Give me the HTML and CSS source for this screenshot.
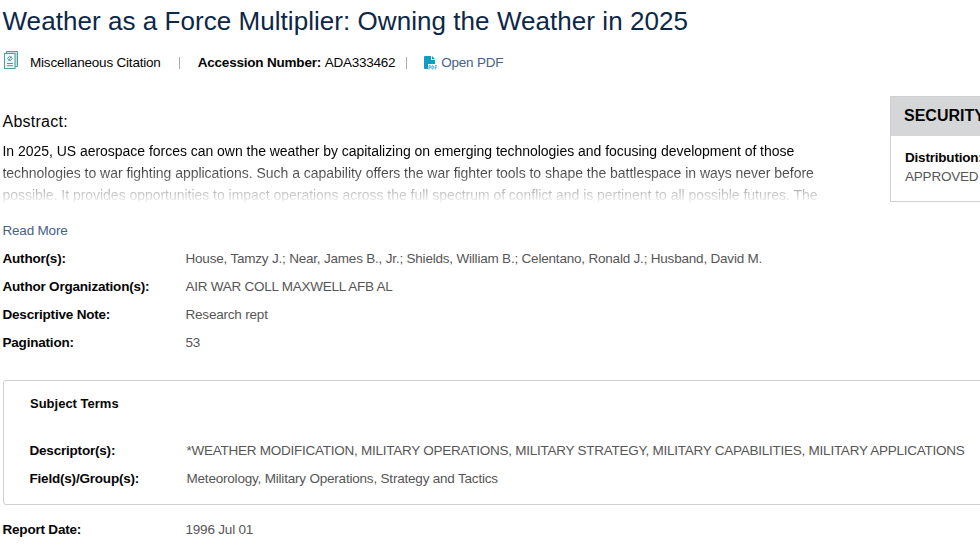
FILE: index.html
```html
<!DOCTYPE html>
<html lang="en">
<head>
  <meta charset="UTF-8" />
  <meta name="viewport" content="width=device-width, initial-scale=1.0" />
  <title>Weather as a Force Multiplier: Owning the Weather in 2025</title>
  <link rel="stylesheet" href="styles.css">
</head>
<body>
  <main class="citation">
    <h1>Weather as a Force Multiplier: Owning the Weather in 2025</h1>

    <div class="meta">
      <svg class="doc-icon" viewBox="0 0 16 19" fill="none" stroke="#4f9c98" stroke-width="1">
        <path d="M3.5 2.5v-2h11v15H12" fill="#c5e3e0" />
        <rect x="1.5" y="2.5" width="10.5" height="15" fill="#f1faf9" />
        <path d="M4.5 7.5l2.2-2.3 2.6 2.2-2.3 2.5zM5.3 9.6l3-4M4 12.5h5.8M4 14.7h5.8" />
      </svg>
      <span class="type">Miscellaneous Citation</span>
      <span class="divider"></span>
      <span class="accession"><b>Accession Number:</b> <span class="number">ADA333462</span></span>
      <span class="divider"></span>
      <a class="pdf" href="#">
        <svg class="pdf-icon" viewBox="0 0 13 14">
          <path d="M1 0h6v4h4v4H4v5H1a1 1 0 0 1-1-1V1a1 1 0 0 1 1-1z" fill="#119cc4" />
          <path d="M8 0l3 3H8z" fill="#119cc4" />
          <path d="M5 13.5V9.7h1a1 1 0 0 1 0 2H5M8 9.7v3.3h.5q1 0 1-1.6t-1-1.7zM11.2 13.5V9.7H13M11.2 11.4h1.5" fill="none" stroke="#39aed0" stroke-width=".9" />
        </svg>
        <span>Open PDF</span>
      </a>
    </div>

    <div class="overview">
      <div class="details">
        <h2>Abstract:</h2>
        <div class="abstract">
          <p>In 2025, US aerospace forces can own the weather by capitalizing on emerging technologies and focusing development of those</p>
          <p>technologies to war fighting applications. Such a capability offers the war fighter tools to shape the battlespace in ways never before</p>
          <p>possible. It provides opportunities to impact operations across the full spectrum of conflict and is pertinent to all possible futures. The</p>
        </div>
        <a class="read-more" href="#">Read More</a>
        <dl class="fields">
          <dt>Author(s):</dt>
          <dd>House, Tamzy J.; Near, James B., Jr.; Shields, William B.; Celentano, Ronald J.; Husband, David M.</dd>
          <dt>Author Organization(s):</dt>
          <dd class="caps">AIR WAR COLL MAXWELL AFB AL</dd>
          <dt>Descriptive Note:</dt>
          <dd>Research rept</dd>
          <dt>Pagination:</dt>
          <dd>53</dd>
        </dl>
      </div>
      <aside class="security">
        <h3>SECURITY</h3>
        <div class="security-body">
          <b>Distribution:</b>
          <span>APPROVED</span>
        </div>
      </aside>
    </div>

    <section class="subjects">
      <h4>Subject Terms</h4>
      <dl class="fields">
        <dt>Descriptor(s):</dt>
        <dd class="caps">*WEATHER MODIFICATION, MILITARY OPERATIONS, MILITARY STRATEGY, MILITARY CAPABILITIES, MILITARY APPLICATIONS</dd>
        <dt>Field(s)/Group(s):</dt>
        <dd>Meteorology, Military Operations, Strategy and Tactics</dd>
      </dl>
    </section>

    <dl class="fields report">
      <dt>Report Date:</dt>
      <dd>1996 Jul 01</dd>
    </dl>
  </main>
</body>
</html>
```
FILE: styles.css
```css
* {
  margin: 0;
  padding: 0;
  box-sizing: border-box;
}

body {
  font-family: "Liberation Sans", Arial, sans-serif;
  font-size: 13.5px;
  letter-spacing: -0.2px;
  color: #050505;
  background: #ffffff;
  overflow: hidden;
}

a {
  color: #466285;
  text-decoration: none;
}

.citation {
  width: 1180px;
  padding-left: 2.5px;
}

h1 {
  font-size: 26px;
  font-weight: 400;
  line-height: 42px;
  letter-spacing: 0.05px;
  color: #0d2747;
  white-space: nowrap;
}

.meta {
  display: flex;
  align-items: center;
  height: 40px;
}

.doc-icon {
  width: 16px;
  height: 19px;
  margin: -3px 11.5px 0 0;
}

.divider {
  width: 1px;
  height: 12px;
  background: #aaaaaa;
  margin: 1px 18px 0 18px;
}

.accession + .divider {
  margin: 1px 17px 0 11px;
}

.number {
  letter-spacing: -0.25px;
}

.pdf {
  display: flex;
  align-items: center;
}

.pdf-icon {
  width: 13px;
  height: 14px;
  margin: 1px 4px 0 0;
}

.overview {
  display: flex;
  align-items: flex-start;
  padding-top: 14px;
}

.details {
  width: 887.5px;
  flex: none;
  padding-top: 15px;
}

h2 {
  font-size: 16px;
  font-weight: 400;
  line-height: 22px;
  letter-spacing: 0.25px;
}

.abstract {
  height: 66px;
  margin-top: 7px;
  line-height: 22px;
  font-size: 14px;
  letter-spacing: -0.03px;
  white-space: nowrap;
  overflow: hidden;
  -webkit-mask-image: linear-gradient(#000 30%, transparent 97%);
  mask-image: linear-gradient(#000 30%, transparent 97%);
}

.read-more {
  display: block;
  margin-top: 11px;
  line-height: 28px;
}

.fields {
  display: grid;
  grid-template-columns: 183px 1fr;
  line-height: 28.1px;
}

.fields dt {
  font-weight: 700;
}

.fields dd {
  color: #565656;
  white-space: nowrap;
}

.fields .caps {
  letter-spacing: -0.25px;
}

.security {
  flex: 1;
  border: 1px solid #d0d0d0;
}

.security h3 {
  height: 39px;
  padding-left: 13px;
  font-size: 16px;
  line-height: 38px;
  letter-spacing: 0;
  background: #d5d6d8;
}

.security-body {
  display: flex;
  flex-direction: column;
  height: 65px;
  padding: 12px 14px;
  line-height: 19px;
}

.security-body span {
  color: #565656;
}

.subjects {
  height: 125px;
  margin-top: 23px;
  padding: 8px 26px;
  border: 1px solid #d0d0d0;
  border-radius: 3px;
}

.subjects h4 {
  font-size: 13px;
  line-height: 29px;
  letter-spacing: 0;
  padding-left: 0.5px;
  margin-bottom: 19px;
}

.subjects .fields {
  grid-template-columns: 157px 1fr;
  line-height: 27.2px;
}

.report {
  margin-top: 11px;
}
```
